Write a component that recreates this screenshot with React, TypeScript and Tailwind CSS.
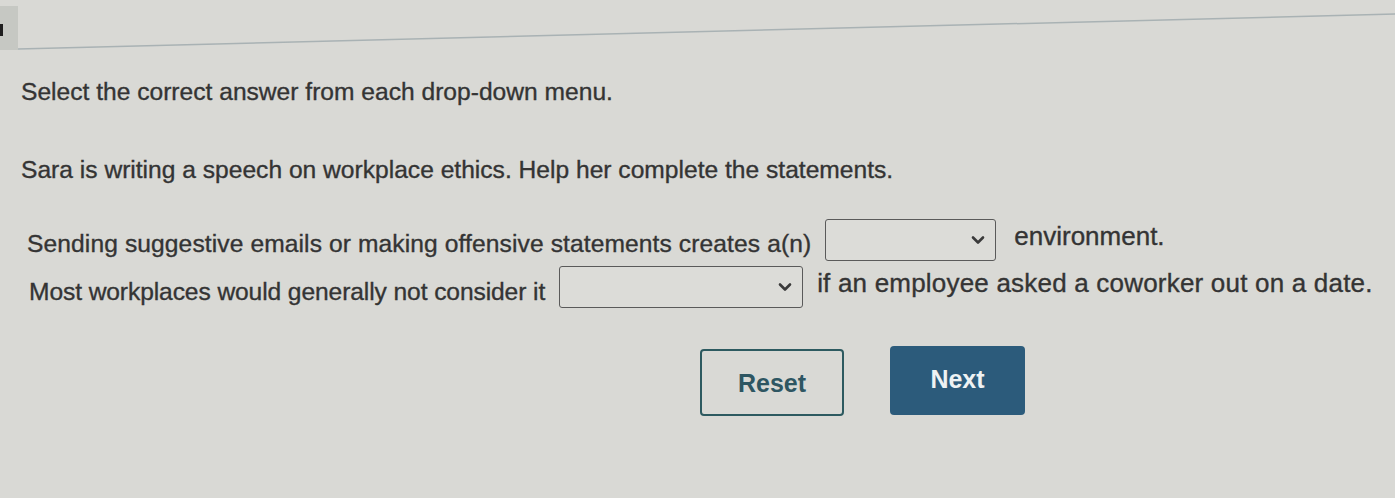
import React from "react";

function Chevron() {
  return (
    <svg width="14" height="10" viewBox="0 0 14 10" className="shrink-0">
      <path d="M2 2.5 L7 7.5 L12 2.5" fill="none" stroke="#3a3a3a" strokeWidth="2.6" strokeLinecap="round" strokeLinejoin="round" />
    </svg>
  );
}

function Dropdown({ w }: { w: string }) {
  return (
    <div className={`${w} h-[42px] border-[1.5px] border-[#5a5a5a] rounded-[3px] flex items-center justify-end pr-[10px] bg-[#dcdcd8]`}>
      <Chevron />
    </div>
  );
}

export default function App() {
  return (
    <div className="w-[1395px] h-[498px] overflow-hidden bg-[#d9d9d5] text-[#343434] font-['Liberation_Sans',Arial,sans-serif] text-[24.6px] leading-[28px] [-webkit-text-stroke:0.35px_#343434]">
      <div className="flex h-[52px]">
        <div className="w-[18px] h-[44px] mt-[6px] bg-[#c6c8c3] flex items-start">
          <div className="w-[3px] h-[12px] mt-[18px] bg-[#1e1e1e]" />
        </div>
        <svg width="1377" height="52" className="block">
          <line x1="0" y1="49" x2="1377" y2="14" stroke="#a9b2b4" strokeWidth="1.5" />
        </svg>
      </div>
      <div className="pl-[21px]">
        <div className="mt-[26px]">Select the correct answer from each drop-down menu.</div>
        <div className="mt-[50px]">Sara is writing a speech on workplace ethics. Help her complete the statements.</div>
        <div className="mt-[35px] flex items-center pl-[6px]">
          <span className="pt-[8px] tracking-[0.1px]">Sending suggestive emails or making offensive statements creates a(n)</span>
          <div className="ml-[14px]">
            <Dropdown w="w-[171px]" />
          </div>
          <span className="ml-[18px] pb-[9px] text-[26px]">environment.</span>
        </div>
        <div className="mt-[5px] flex items-center pl-[8px]">
          <span className="pt-[10px] tracking-[-0.1px]">Most workplaces would generally not consider it</span>
          <div className="ml-[14px]">
            <Dropdown w="w-[244px]" />
          </div>
          <span className="ml-[14px] pb-[9px] text-[26px] tracking-[0.2px]">if an employee asked a coworker out on a date.</span>
        </div>
        <div className="mt-[38px] ml-[679px] flex items-start gap-[46px]">
          <button className="mt-[3px] w-[144px] h-[67px] border-[2.5px] border-[#2d5a60] rounded-[4px] text-[#2e5662] font-bold text-[25px] [-webkit-text-stroke:0px] flex items-center justify-center">
            Reset
          </button>
          <button className="w-[135px] h-[69px] bg-[#2c5b7b] rounded-[4px] text-[#eef2f3] font-bold text-[25px] [-webkit-text-stroke:0px] flex items-center justify-center pb-[4px]">
            Next
          </button>
        </div>
      </div>
    </div>
  );
}
